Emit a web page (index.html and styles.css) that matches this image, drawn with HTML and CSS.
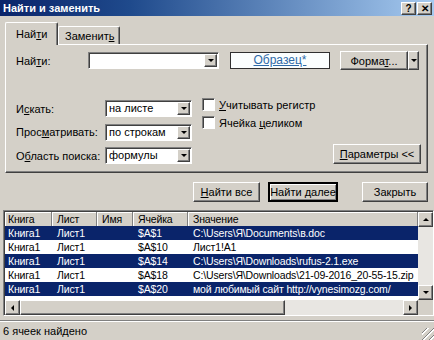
FILE: index.html
```html
<!DOCTYPE html>
<html lang="ru">
<head>
    <meta charset="UTF-8">
    <title>Найти и заменить</title>
    <link rel="stylesheet" href="styles.css">
</head>
<body>
    <div class="dialog">
        <div class="titlebar">
            <span class="title">Найти и заменить</span>
            <div class="tb-buttons">
                <span class="tb-btn">?</span>
                <span class="tb-btn">✕</span>
            </div>
        </div>

        <div class="tabs">
            <div class="tab active"><span>Най<u>т</u>и</span></div>
            <div class="tab"><span>Заменит<u>ь</u></span></div>
        </div>

        <div class="panel">
            <div class="find-row">
                <span class="find-label">Най<u>т</u>и:</span>
                <div class="combo find-combo"><span class="combo-text"></span><span class="arrow-btn"></span></div>
                <div class="sample">Образец*</div>
                <div class="format">
                    <span class="btn format-btn"><span>Форма<u>т</u>...</span></span>
                    <span class="btn format-arrow"></span>
                </div>
            </div>

            <div class="options">
                <div class="opt-grid">
                    <span class="opt-label">И<u>с</u>кать:</span>
                    <div class="combo"><span class="combo-text">на листе</span><span class="arrow-btn"></span></div>
                    <span class="opt-label">Прос<u>м</u>атривать:</span>
                    <div class="combo"><span class="combo-text">по строкам</span><span class="arrow-btn"></span></div>
                    <span class="opt-label">О<u>б</u>ласть поиска:</span>
                    <div class="combo"><span class="combo-text">формулы</span><span class="arrow-btn"></span></div>
                </div>
                <div class="opt-right">
                    <div class="checks">
                        <div class="check"><span class="box"></span><span><u>У</u>читывать регистр</span></div>
                        <div class="check"><span class="box"></span><span>Ячейка <u>ц</u>еликом</span></div>
                    </div>
                    <span class="btn params-btn"><span><u>П</u>араметры &lt;&lt;</span></span>
                </div>
            </div>
        </div>

        <div class="actions">
            <span class="btn find-all"><span><u>Н</u>айти все</span></span>
            <span class="btn find-next default"><span>Найти <u>д</u>алее</span></span>
            <span class="btn close-btn"><span>Закрыть</span></span>
        </div>

        <div class="results">
            <div class="table">
                <div class="row head">
                    <span>Книга</span><span>Лист</span><span>Имя</span><span>Ячейка</span><span>Значение</span>
                </div>
                <div class="row sel">
                    <span>Книга1</span><span>Лист1</span><span></span><span>$A$1</span><span>C:\Users\Я\Documents\в.doc</span>
                </div>
                <div class="row">
                    <span>Книга1</span><span>Лист1</span><span></span><span>$A$10</span><span>Лист1!A1</span>
                </div>
                <div class="row sel">
                    <span>Книга1</span><span>Лист1</span><span></span><span>$A$14</span><span>C:\Users\Я\Downloads\rufus-2.1.exe</span>
                </div>
                <div class="row">
                    <span>Книга1</span><span>Лист1</span><span></span><span>$A$18</span><span>C:\Users\Я\Downloads\21-09-2016_20-55-15.zip</span>
                </div>
                <div class="row sel">
                    <span>Книга1</span><span>Лист1</span><span></span><span>$A$20</span><span>мой любимый сайт http://vynesimozg.com/</span>
                </div>
            </div>
            <div class="vscroll">
                <span class="sb-btn up"></span>
                <span class="sb-track"></span>
                <span class="sb-btn down"></span>
            </div>
            <div class="hscroll">
                <span class="sb-btn left"></span>
                <span class="sb-thumb"></span>
                <span class="sb-track"></span>
                <span class="sb-btn right"></span>
            </div>
            <div class="corner"></div>
        </div>

        <div class="status">
            <span>6 ячеек найдено</span>
            <span class="grip"></span>
        </div>
    </div>
</body>
</html>
```

FILE: styles.css
```css
body {
    margin: 0;
    font-family: "Liberation Sans", Arial, sans-serif;
    font-size: 11px;
    color: #000;
    background: #d4d0c8;
}
u {
    text-decoration: underline;
    text-underline-offset: 1px;
}
.dialog {
    width: 434px;
    height: 340px;
    overflow: hidden;
    background: #d4d0c8;
    display: flex;
    flex-direction: column;
}

/* title bar */
.titlebar {
    height: 16px;
    flex: none;
    display: flex;
    align-items: center;
    justify-content: space-between;
    padding: 0 2px 0 3px;
    background: linear-gradient(to right, #0a246a, #1f4a8c 30%, #a6caf0);
}
.title {
    color: white;
    font-weight: bold;
    font-size: 11px;
}
.tb-buttons {
    display: flex;
    gap: 1px;
}
.tb-btn {
    width: 15px;
    height: 13px;
    box-sizing: border-box;
    background: #d4d0c8;
    border: 1px solid;
    border-color: #fff #404040 #404040 #fff;
    box-shadow: inset -1px -1px #808080;
    font-size: 10px;
    font-weight: bold;
    line-height: 11px;
    text-align: center;
}

/* tabs */
.tabs {
    display: flex;
    align-items: flex-end;
    margin-top: 6px;
    padding-left: 5px;
    height: 22px;
    flex: none;
}
.tab {
    height: 18px;
    box-sizing: border-box;
    border: 1px solid;
    border-color: #fff #404040 transparent #fff;
    border-bottom: none;
    box-shadow: inset -1px 0 #808080;
    border-radius: 2px 2px 0 0;
    padding: 3px 5px 0 6px;
    white-space: nowrap;
}
.tab.active {
    height: 23px;
    width: 53px;
    padding: 5px 0 0 10px;
    position: relative;
    top: 1px;
    background: #d4d0c8;
    z-index: 1;
}

/* tab panel */
.panel {
    height: 129px;
    flex: none;
    box-sizing: border-box;
    margin: 0 6px 0 5px;
    border: 1px solid;
    border-color: #fff #404040 #404040 #fff;
    box-shadow: inset -1px -1px #808080;
    padding: 7px 6px 0 10px;
}
.find-row {
    display: flex;
    align-items: center;
    height: 17px;
}
.find-label {
    width: 72px;
}
.combo {
    height: 17px;
    box-sizing: border-box;
    display: flex;
    background: white;
    border: 1px solid;
    border-color: #808080 #fff #fff #808080;
    box-shadow: inset 1px 1px #404040;
    padding: 1px 1px 1px 2px;
}
.combo-text {
    flex: 1;
    line-height: 13px;
    padding-left: 1px;
}
.find-combo {
    width: 131px;
}
.arrow-btn {
    width: 13px;
    box-sizing: border-box;
    background: #d4d0c8;
    border: 1px solid;
    border-color: #fff #404040 #404040 #fff;
    box-shadow: inset -1px -1px #808080;
    display: flex;
    align-items: center;
    justify-content: center;
}
.arrow-btn::after,
.format-arrow::after {
    content: "";
    border-left: 3px solid transparent;
    border-right: 3px solid transparent;
    border-top: 3px solid #000;
}
.sample {
    width: 100px;
    height: 17px;
    box-sizing: border-box;
    margin-left: 11px;
    background: #fbfefe;
    border: 1px solid #303030;
    text-align: center;
    line-height: 15px;
    font-size: 12px;
    color: #2f6aa8;
    text-decoration: underline;
}
.btn {
    box-sizing: border-box;
    background: #d4d0c8;
    border: 1px solid;
    border-color: #fff #404040 #404040 #fff;
    box-shadow: inset -1px -1px #808080;
    display: flex;
    align-items: center;
    justify-content: center;
    white-space: nowrap;
}
.format {
    display: flex;
    margin-left: 10px;
    height: 19px;
}
.format-btn {
    width: 68px;
}
.format-arrow {
    width: 11px;
}

/* options */
.options {
    display: flex;
    margin-top: 29px;
}
.opt-grid {
    display: grid;
    grid-template-columns: 89px 87px;
    grid-auto-rows: 17px;
    row-gap: 6.5px;
    padding-top: 2px;
    align-items: center;
}
.opt-right {
    flex: 1;
    margin-left: 10px;
    display: flex;
    flex-direction: column;
    justify-content: space-between;
}
.checks {
    display: flex;
    flex-direction: column;
    gap: 5px;
}
.check {
    display: flex;
    align-items: center;
    height: 13px;
}
.box {
    width: 13px;
    height: 13px;
    box-sizing: border-box;
    background: white;
    border: 1px solid;
    border-color: #808080 #fff #fff #808080;
    box-shadow: inset 1px 1px #404040;
    margin-right: 4px;
}
.params-btn {
    align-self: flex-end;
    width: 88px;
    height: 20px;
}

/* action buttons */
.actions {
    display: flex;
    justify-content: flex-end;
    margin-top: 9px;
    padding-right: 6px;
    height: 20px;
    flex: none;
}
.find-all {
    width: 67px;
}
.find-next {
    width: 70px;
    margin-left: 8px;
}
.btn.default {
    border: 2px solid;
    border-color: #000;
    box-shadow: inset 1px 1px #fff, inset -1px -1px #808080;
}
.close-btn {
    width: 66px;
    margin-left: 24px;
}

/* results list */
.results {
    margin: 8px 0 0 3px;
    width: 431px;
    height: 106px;
    flex: none;
    box-sizing: border-box;
    border: 1px solid;
    border-color: #808080 #fff #fff #808080;
    box-shadow: inset 1px 1px #404040;
    padding: 1px 0 0 1px;
    background: white;
    display: grid;
    grid-template-columns: 1fr 15px;
    grid-template-rows: 1fr 15px;
    font-size: 10.5px;
    letter-spacing: -0.15px;
}
.table {
    overflow: hidden;
}
.row {
    display: grid;
    grid-template-columns: 47px 45px 36px 55px 1fr;
    height: 14px;
    line-height: 14px;
    white-space: nowrap;
}
.row span {
    padding-left: 5px;
    overflow: hidden;
}
.row span:first-child {
    padding-left: 3px;
}
.row.head {
    background: #d4d0c8;
}
.row.head span {
    box-sizing: border-box;
    border-right: 1px solid #808080;
    box-shadow: inset 1px 1px #fff;
}
.row.sel {
    background: #0a246a;
    color: white;
}
.vscroll,
.hscroll {
    display: flex;
    background: #e8e6e2;
}
.vscroll {
    flex-direction: column;
}
.sb-track {
    flex: 1;
}
.sb-btn,
.sb-thumb {
    width: 15px;
    height: 15px;
    box-sizing: border-box;
    background: #d4d0c8;
    border: 1px solid;
    border-color: #fff #404040 #404040 #fff;
    box-shadow: inset -1px -1px #808080;
    display: flex;
    align-items: center;
    justify-content: center;
}
.sb-thumb {
    width: 265px;
}
.sb-btn.up::after {
    content: "";
    border-left: 3px solid transparent;
    border-right: 3px solid transparent;
    border-bottom: 3px solid #000;
}
.sb-btn.down::after {
    content: "";
    border-left: 3px solid transparent;
    border-right: 3px solid transparent;
    border-top: 3px solid #000;
}
.sb-btn.left::after {
    content: "";
    border-top: 3px solid transparent;
    border-bottom: 3px solid transparent;
    border-right: 3px solid #000;
}
.sb-btn.right::after {
    content: "";
    border-top: 3px solid transparent;
    border-bottom: 3px solid transparent;
    border-left: 3px solid #000;
}
.corner {
    background: #d4d0c8;
}

/* status bar */
.status {
    margin-top: 4px;
    flex: 1;
    border-top: 1px solid #808080;
    box-shadow: inset 0 1px #fff;
    display: flex;
    align-items: center;
    justify-content: space-between;
    padding-left: 3px;
}
.grip {
    width: 12px;
    height: 12px;
    align-self: flex-end;
    background: repeating-linear-gradient(135deg, transparent 0 3px, #808080 3px 4px, #fff 4px 5px);
}
```
